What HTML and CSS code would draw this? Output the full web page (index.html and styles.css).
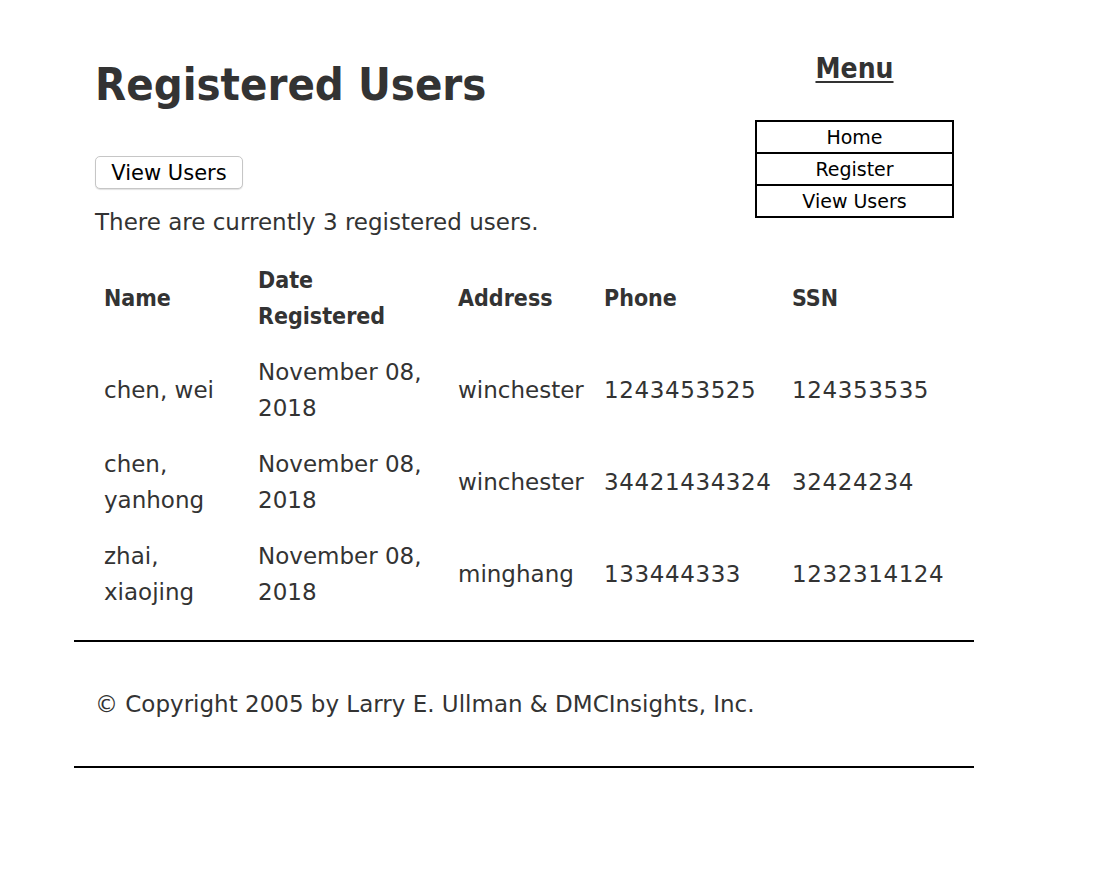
FILE: index.html
```html
<!DOCTYPE html>
<html>
<head>
<meta charset="utf-8">
<title>Registered Users</title>
<link rel="stylesheet" href="styles.css">
</head>
<body>
<div class="page">
  <div class="main">
    <div class="top">
      <div class="intro">
        <h1 class="title">Registered Users</h1>
        <button class="btn" type="button">View Users</button>
        <p class="count">There are currently 3 registered users.</p>
      </div>
      <div class="menu">
        <h2 class="menu-title">Menu</h2>
        <ul class="menu-list">
          <li>Home</li>
          <li>Register</li>
          <li>View Users</li>
        </ul>
      </div>
    </div>
    <table class="users">
      <colgroup>
        <col class="c-name">
        <col class="c-date">
        <col class="c-addr">
        <col class="c-phone">
        <col class="c-ssn">
      </colgroup>
      <tr><th>Name</th><th>Date<br>Registered</th><th>Address</th><th>Phone</th><th>SSN</th></tr>
      <tr><td>chen, wei</td><td>November 08,<br>2018</td><td>winchester</td><td class="num">1243453525</td><td class="num">124353535</td></tr>
      <tr><td>chen,<br>yanhong</td><td>November 08,<br>2018</td><td>winchester</td><td class="num">34421434324</td><td class="num">32424234</td></tr>
      <tr><td>zhai,<br>xiaojing</td><td>November 08,<br>2018</td><td>minghang</td><td class="num">133444333</td><td class="num">1232314124</td></tr>
    </table>
  </div>
  <div class="footer">
    <p>© Copyright 2005 by Larry E. Ullman &amp; DMCInsights, Inc.</p>
  </div>
</div>
</body>
</html>
```
FILE: styles.css
```css
html, body { margin: 0; padding: 0; background: #fff; }
body { font-family: "DejaVu Sans", Verdana, sans-serif; color: #333; }
.page { width: 900px; margin-left: 74px; }
.main { padding: 0 20px 20px 20px; border-bottom: 2px solid #000; }
.top { display: flex; justify-content: space-between; align-items: flex-start; }
.intro { padding-left: 1px; }
.title { font-family: "DejaVu Sans Condensed", "DejaVu Sans", sans-serif; font-size: 45px; font-weight: bold; line-height: 56px; margin: 57px 0 43px 0; }
.btn { display: block; font-family: "DejaVu Sans", sans-serif; font-size: 21px; width: 148px; height: 33px; padding: 0; background: #fff; border: 1px solid #c6c6c6; border-radius: 5px; box-shadow: 0 1px 1px rgba(0,0,0,0.12); color: #000; }
.count { font-size: 23px; line-height: 36px; margin: 15px 0 0 0; }
.menu { width: 199px; text-align: center; }
.menu-title { font-family: "DejaVu Sans Condensed", "DejaVu Sans", sans-serif; font-size: 28px; font-weight: bold; text-decoration: underline; text-decoration-thickness: 2px; text-underline-offset: 3px; line-height: 36px; margin: 51px 0 33px 0; }
.menu-list { list-style: none; margin: 0; padding: 0; border: 2px solid #000; color: #000; font-size: 19px; }
.menu-list li { line-height: 30px; border-top: 2px solid #000; }
.menu-list li:first-child { border-top: none; }
.users { width: 100%; table-layout: fixed; border-collapse: collapse; margin-top: 12px; font-size: 23px; }
.c-name { width: 154px; }
.c-date { width: 200px; }
.c-addr { width: 146px; }
.c-phone { width: 188px; }
.users th { font-family: "DejaVu Sans Condensed", "DejaVu Sans", sans-serif; text-align: left; font-weight: bold; padding: 10px; line-height: 36px; }
.users td { padding: 10px; line-height: 36px; }
.users td.num { letter-spacing: 0.6px; }
.footer { border-bottom: 2px solid #000; padding: 44px 20px 44px 21px; }
.footer p { margin: 0; font-size: 23px; line-height: 36px; }
```
